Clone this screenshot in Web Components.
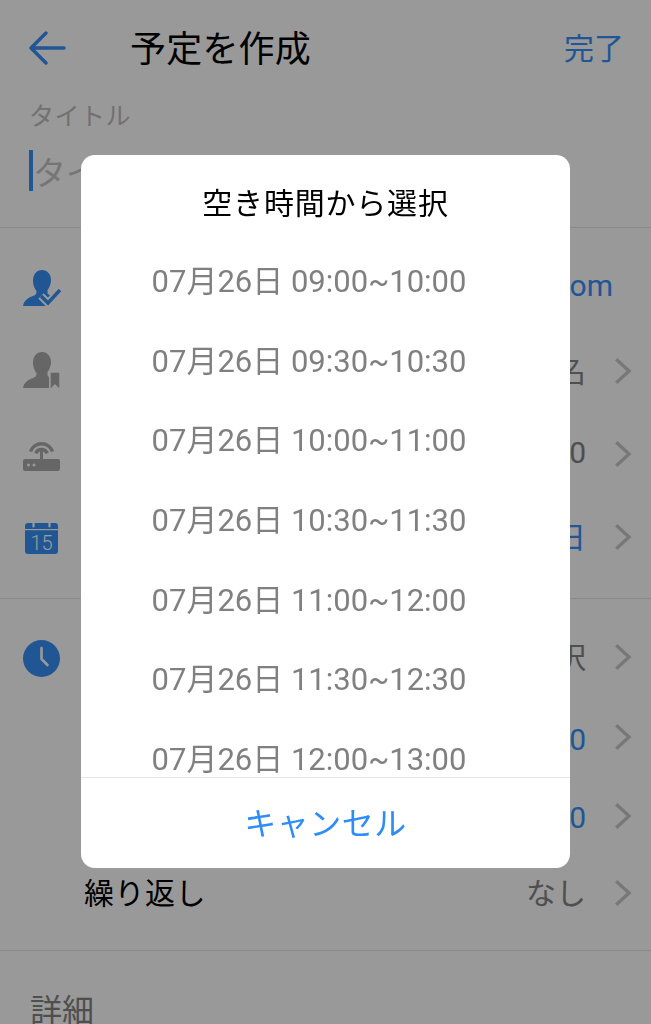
<!DOCTYPE html>
<html lang="ja">
<head>
<meta charset="utf-8">
<style>
    html, body { margin: 0; height: 1024px; overflow: hidden; background: #fff; }
    body { font-family: Roboto, "Noto Sans CJK JP", sans-serif; }
</style>
</head>
<body>
<template id="form-header-tpl">
    <style>
        :host { display: flex; align-items: center; height: 96px; padding: 0 27px 0 29px; color: #000; }
        svg { width: 37px; height: 34px; flex: none; }
        span { padding-bottom: 5px; }
        .title { font-size: 36px; margin-left: 64px; flex: 1; letter-spacing: .2px; }
        .done { font-size: 30px; color: #3890f8; }
    </style>
    <svg viewBox="0 0 37 34" fill="none" stroke="#3890f8" stroke-width="3.4" stroke-linecap="round" stroke-linejoin="round"><path d="M35 17H2M17 2 2 17l15 15"/></svg>
    <span class="title">予定を作成</span>
    <span class="done">完了</span>
</template>

<template id="title-field-tpl">
    <style>
        :host { display: block; height: 132px; padding: 0 29px; box-sizing: border-box; border-bottom: 1px solid #e4e4e4; }
        .label { font-size: 25px; line-height: 42px; color: #bdbdbd; letter-spacing: .5px; }
        .input { display: flex; align-items: center; margin-top: 12px; font-size: 33px; color: #c4c4c4; height: 41px; }
        .caret { width: 4px; height: 41px; background: #3890f8; flex: none; }
    </style>
    <div class="label">タイトル</div>
    <div class="input"><span class="caret"></span><span>タイトル</span></div>
</template>

<template id="form-section-tpl">
    <style>
        :host { display: block; box-sizing: border-box; border-bottom: 1px solid #e4e4e4; }
    </style>
    <slot></slot>
</template>

<template id="form-row-tpl">
    <style>
        :host { display: flex; align-items: center; height: var(--row-h, 83px); padding: 0 19px 0 23px; font-size: 30px; color: #000; }
        .icon { width: 61px; flex: none; display: flex; align-items: center; }
        .label { flex: 1; padding-bottom: 4px; letter-spacing: .5px; }
        .value { color: #848484; padding: var(--val-top, 0) 0 var(--val-bottom, 4px); }
        :host([accent]) .value { color: #3890f8; }
        :host([nochev]) .value { margin-right: 19px; }
        .chev { width: 18px; height: 26px; margin-left: 28px; flex: none; }
        :host([nochev]) .chev { display: none; }
    </style>
    <span class="icon"><slot name="icon"></slot></span>
    <span class="label"></span>
    <span class="value"></span>
    <svg class="chev" viewBox="0 0 18 26" fill="none" stroke="#c8c8c8" stroke-width="3.4" stroke-linecap="square" stroke-linejoin="miter"><path d="M3.500 2.500 15 13 3.500 23.500"/></svg>
</template>

<template id="modal-dialog-tpl">
    <style>
        :host { position: fixed; inset: 0; padding-bottom: 1px; display: flex; align-items: center; justify-content: center; background: rgba(0,0,0,.4); }
        .box { width: 489px; height: 713px; background: #fff; border-radius: 14px; display: flex; flex-direction: column; overflow: hidden; }
        .head { height: 87px; flex: none; font-size: 30px; letter-spacing: .8px; color: #000; display: flex; align-items: center; justify-content: center; padding-top: 4px; box-sizing: border-box; }
        .list { flex: 1; overflow: hidden; min-height: 0; }
        .list slot { display: block; margin-top: -3px; }
        .foot { height: 91px; flex: none; box-sizing: border-box; border-top: 1px solid #e8e8e8; padding-bottom: 4px; font-size: 32px; letter-spacing: .5px; color: #2d8cf5; display: flex; align-items: center; justify-content: center; }
    </style>
    <div class="box">
        <div class="head"></div>
        <div class="list"><slot></slot></div>
        <div class="foot"></div>
    </div>
</template>

<template id="time-option-tpl">
    <style>
        :host { display: flex; align-items: center; justify-content: center; height: 79.6px; padding-right: 33px; font-size: 31px; color: #808080; white-space: pre; }
    </style>
    <slot></slot>
</template>

<form-header></form-header>
<title-field></title-field>

<form-section style="height:371px;padding-top:18px">
    <form-row value="om" accent nochev>
        <svg slot="icon" width="39" height="36" viewBox="0 0 39 36"><path fill="#3890f8" d="M19 0c5.500 0 9 4.500 9 10 0 4-1.500 7.500-3.500 10v3.500L29 27l-6.500 9H0c1-5 4-8 10-10 2.800-1 3.500-2 3.500-5-2-2.500-3.500-6-3.500-10C10 4.500 13.500 0 19 0z"/><path fill="none" stroke="#fff" stroke-width="7.500" d="M18 26l7 7 12-13"/><path fill="none" stroke="#3890f8" stroke-width="3.400" d="M18 26l7 7 12-13"/></svg>
    </form-row>
    <form-row value="名">
        <svg slot="icon" width="38" height="38" viewBox="0 0 38 38"><path fill="#aaa" d="M19 0c5.500 0 9 4.500 9 10 0 4-1.500 7.500-3.500 10v3c0 1 .5 1.500 1.500 2v11H0c1-5 4-8 10-10 2.800-1 3.500-2 3.500-5-2-2.500-3.500-6-3.500-10C10 4.500 13.500 0 19 0z"/><path fill="#aaa" stroke="#fff" stroke-width="1.500" d="M27 20h10v18l-5-5-5 5z"/></svg>
    </form-row>
    <form-row value="0" style="--val-bottom:2px">
        <svg slot="icon" style="margin-top:6px" width="37" height="29" viewBox="0 0 37 29"><g fill="none" stroke="#aaa" stroke-width="3.500"><path d="M7.460 9.500a11.750 11.750 0 0 1 22.080 0"/><path d="M12.860 11.450a6 6 0 0 1 11.280 0"/></g><rect x="17" y="9" width="3" height="9" fill="#aaa"/><rect y="17" width="37" height="12" rx="2" fill="#aaa"/><circle cx="5.500" cy="23" r="1.500" fill="#fff"/><circle cx="11" cy="23" r="1.500" fill="#fff"/></svg>
    </form-row>
    <form-row value="日" accent>
        <svg slot="icon" style="margin-left:2px" width="33" height="34" viewBox="0 0 33 34"><path fill="#3890f8" d="M3 3h27a3 3 0 0 1 3 3v25a3 3 0 0 1-3 3H3a3 3 0 0 1-3-3V6a3 3 0 0 1 3-3z"/><rect y="9" width="33" height="1.200" fill="#fff"/><path stroke="#fff" stroke-width="2.200" stroke-linecap="round" d="M8.500 1.500v5M24.500 1.500v5"/><text x="16.500" y="30" text-anchor="middle" font-family="Roboto" font-weight="300" font-size="20" fill="#fff">15</text></svg>
    </form-row>
</form-section>

<form-section style="height:352px;padding-top:18px">
    <form-row value="択" style="--row-h:80px">
        <svg slot="icon" style="margin-top:2px" width="37" height="37" viewBox="0 0 37 37"><circle cx="18.500" cy="18.500" r="18.500" fill="#3890f8"/><path fill="none" stroke="#fff" stroke-width="2.600" stroke-linecap="round" stroke-linejoin="round" d="M18.500 8v11l6 6"/></svg>
    </form-row>
    <form-row value="0" accent style="--row-h:80px;--val-top:4px;--val-bottom:0px"></form-row>
    <form-row value="0" accent style="--row-h:77px;--val-top:4px;--val-bottom:0px"></form-row>
    <form-row label="繰り返し" value="なし" style="--row-h:77px"></form-row>
</form-section>

<div style="padding:38px 0 0 30px;font-size:32px;line-height:44px;color:#848484">詳細</div>

<modal-dialog heading="空き時間から選択" cancel="キャンセル">
    <time-option>07月26日 09:00~10:00</time-option>
    <time-option>07月26日 09:30~10:30</time-option>
    <time-option>07月26日 10:00~11:00</time-option>
    <time-option>07月26日 10:30~11:30</time-option>
    <time-option>07月26日 11:00~12:00</time-option>
    <time-option>07月26日 11:30~12:30</time-option>
    <time-option>07月26日 12:00~13:00</time-option>
</modal-dialog>

<script>
    // plain elements: clone their template, nothing else
    const simple = (tag) => {
        class Simple extends HTMLElement {
            constructor() {
                super();
                this.attachShadow({mode: 'open'});
                this.shadowRoot.appendChild(document.getElementById(tag + '-tpl').content.cloneNode(true));
            }
        }
        return Simple;
    };
    customElements.define('form-header', simple('form-header'));
    customElements.define('title-field', simple('title-field'));
    customElements.define('form-section', simple('form-section'));
    customElements.define('time-option', simple('time-option'));

    class FormRow extends simple('form-row') {
        connectedCallback() {
            this.shadowRoot.querySelector('.label').textContent = this.getAttribute('label') || '';
            this.shadowRoot.querySelector('.value').textContent = this.getAttribute('value') || '';
        }
    }
    customElements.define('form-row', FormRow);

    class ModalDialog extends simple('modal-dialog') {
        connectedCallback() {
            this.shadowRoot.querySelector('.head').textContent = this.getAttribute('heading');
            this.shadowRoot.querySelector('.foot').textContent = this.getAttribute('cancel');
        }
    }
    customElements.define('modal-dialog', ModalDialog);
</script>
</body>
</html>
